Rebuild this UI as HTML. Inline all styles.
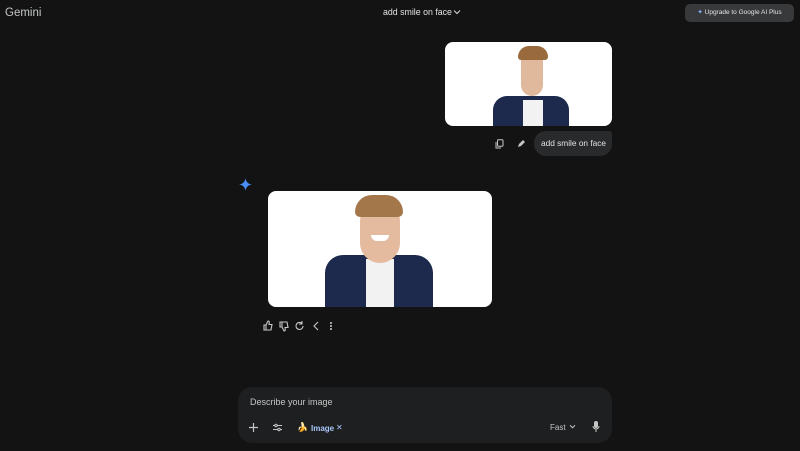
<!DOCTYPE html>
<html><head><style>
body{margin:0;width:800px;height:451px;background:#131314;font-family:"Liberation Sans",sans-serif;color:#e3e3e3;position:relative;overflow:hidden}
.a{position:absolute}
.img{background:#fff;border-radius:8px;overflow:hidden}
svg{position:absolute}
</style></head><body>
<div class="a" style="left:5px;top:7px;font-size:11.5px;color:#c4c7c5">Gemini</div>
<div class="a" style="left:383px;top:7px;font-size:8.8px;color:#e3e3e3">add smile on face</div>
<svg style="left:453px;top:9px" width="8" height="6" viewBox="0 0 8 6"><path d="M1 1.5L4 4.5L7 1.5" stroke="#c4c7c5" stroke-width="1.2" fill="none"/></svg>
<div class="a" style="left:685px;top:4px;width:109px;height:18px;background:#37393b;border-radius:5px;font-size:6.5px;color:#e3e3e3;line-height:18px;text-align:center"><span style="color:#8ab4f8">✦</span> Upgrade to Google AI Plus</div>

<div class="a img" style="left:445px;top:42px;width:167px;height:84px">
 <div class="a" style="left:48px;top:54px;width:76px;height:34px;background:#1d2a4d;border-radius:14px 14px 0 0"></div>
 <div class="a" style="left:78px;top:58px;width:20px;height:28px;background:#f2f2f2"></div>
 <div class="a" style="left:76px;top:10px;width:22px;height:44px;background:#e0b89c;border-radius:10px 10px 12px 12px"></div>
 <div class="a" style="left:73px;top:4px;width:30px;height:14px;background:#9a6a3f;border-radius:14px 14px 4px 4px"></div>
</div>
<svg style="left:495px;top:139px" width="9" height="10" viewBox="0 0 9 10"><rect x="2.5" y="0.8" width="5.5" height="6.5" rx="1" stroke="#c4c7c5" fill="none"/><path d="M1 3v6h5" stroke="#c4c7c5" fill="none"/></svg>
<svg style="left:517px;top:139px" width="9" height="9" viewBox="0 0 9 9"><path d="M1 8l1-3 4-4 2 2-4 4z" fill="#c4c7c5"/></svg>
<div class="a" style="left:534px;top:131px;width:78px;height:25px;background:#282a2c;border-radius:12px 3px 12px 12px;font-size:8.3px;line-height:25px;padding-left:7px;box-sizing:border-box;white-space:nowrap">add smile on face</div>

<svg style="left:239px;top:178px" width="13" height="13" viewBox="0 0 12 12"><path d="M6 0C6.4 3.5 8.5 5.6 12 6 8.5 6.4 6.4 8.5 6 12 5.6 8.5 3.5 6.4 0 6 3.5 5.6 5.6 3.5 6 0z" fill="#4a8df7"/></svg>
<div class="a img" style="left:268px;top:191px;width:224px;height:116px">
 <div class="a" style="left:57px;top:64px;width:108px;height:56px;background:#1d2a4d;border-radius:18px 18px 0 0"></div>
 <div class="a" style="left:98px;top:68px;width:28px;height:50px;background:#f2f2f2"></div>
 <div class="a" style="left:92px;top:12px;width:40px;height:60px;background:#e5bba0;border-radius:18px 18px 20px 20px"></div>
 <div class="a" style="left:87px;top:4px;width:48px;height:22px;background:#a4774b;border-radius:20px 20px 6px 6px"></div>
 <div class="a" style="left:103px;top:44px;width:18px;height:6px;background:#fff;border-radius:0 0 8px 8px"></div>
</div>
<svg style="left:262px;top:320px" width="80" height="12" viewBox="0 0 80 12" fill="none" stroke="#c4c7c5" stroke-width="1.1">
 <path d="M2 5h2v5H2zM4 5l2-4c1 0 1.5.5 1.2 2L7 4.5h3l-1 5.5H4"/>
 <path d="M18 7h2V2h-2zM20 7l2 4c1 0 1.5-.5 1.2-2L23 7.5h3l-1-5.5h-5"/>
 <path d="M41 6a3.5 3.5 0 1 1-1-2.5M40 1v3h-3"/>
 <path d="M56 2l-4 4 4 4"/>
 <circle cx="69" cy="3" r=".5" fill="#c4c7c5"/><circle cx="69" cy="6" r=".5" fill="#c4c7c5"/><circle cx="69" cy="9" r=".5" fill="#c4c7c5"/>
</svg>

<div class="a" style="left:238px;top:387px;width:374px;height:56px;background:#1e1f20;border-radius:14px">
 <div class="a" style="left:12px;top:10px;font-size:9px;color:#c4c7c5">Describe your image</div>
 <svg style="left:11px;top:36px" width="9" height="9" viewBox="0 0 9 9"><path d="M4.5 0v9M0 4.5h9" stroke="#c4c7c5" stroke-width="1.2"/></svg>
 <svg style="left:35px;top:36px" width="9" height="9" viewBox="0 0 9 9" stroke="#c4c7c5" fill="none"><path d="M0 2.5h9M0 6.5h9"/><circle cx="3" cy="2.5" r="1.2" fill="#1e1f20"/><circle cx="6" cy="6.5" r="1.2" fill="#1e1f20"/></svg>
 <div class="a" style="left:59px;top:35px;font-size:9px">🍌</div>
 <div class="a" style="left:73px;top:37px;font-size:8px;color:#a8c7fa;font-weight:bold">Image</div>
 <div class="a" style="left:98px;top:36px;font-size:8px;color:#a8c7fa">✕</div>
 <div class="a" style="left:312px;top:36px;font-size:8px;color:#c4c7c5">Fast</div>
 <svg style="left:331px;top:37px" width="7" height="5" viewBox="0 0 8 6"><path d="M1 1.5L4 4.5L7 1.5" stroke="#c4c7c5" stroke-width="1.2" fill="none"/></svg>
 <svg style="left:354px;top:34px" width="8" height="11" viewBox="0 0 8 11"><rect x="2" y="0" width="4" height="7" rx="2" fill="#c4c7c5"/><path d="M1 5a3 3 0 0 0 6 0M4 8v3" stroke="#c4c7c5" fill="none"/></svg>
</div>
</body></html>
